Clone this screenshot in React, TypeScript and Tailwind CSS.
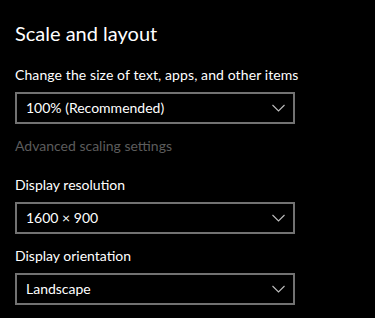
import React from "react";

function Chevron() {
  return (
    <svg width="13" height="8" viewBox="0 0 13 8" className="shrink-0">
      <path d="M0.5 1 L6.5 7 L12.5 1" fill="none" stroke="#bdbdbd" strokeWidth="1.1" />
    </svg>
  );
}

function Select({ value }: { value: string }) {
  return (
    <div className="box-border flex h-[32px] w-[280px] items-center justify-between border-2 border-[#727272] pl-[9px] pr-[8px] text-[14px] leading-[20px] text-white">
      <span>{value}</span>
      <Chevron />
    </div>
  );
}

export default function App() {
  return (
    <div
      className="h-[318px] w-[375px] bg-black pl-[15px] text-white"
      style={{ fontFamily: 'Lato, "Noto Sans", sans-serif' }}
    >
      <div className="pt-[19px] text-[20px] leading-[28px]">Scale and layout</div>
      <div className="mt-[18px] text-[14px] leading-[20px] tracking-[0.1px]">Change the size of text, apps, and other items</div>
      <div className="mt-[7px]">
        <Select value="100% (Recommended)" />
      </div>
      <div className="mt-[12px] text-[14px] leading-[20px] text-[#5c5c5c]">Advanced scaling settings</div>
      <div className="mt-[19px] text-[14px] leading-[20px]">Display resolution</div>
      <div className="mt-[7px]">
        <Select value="1600 × 900" />
      </div>
      <div className="mt-[12px] text-[14px] leading-[20px]">Display orientation</div>
      <div className="mt-[7px]">
        <Select value="Landscape" />
      </div>
    </div>
  );
}
